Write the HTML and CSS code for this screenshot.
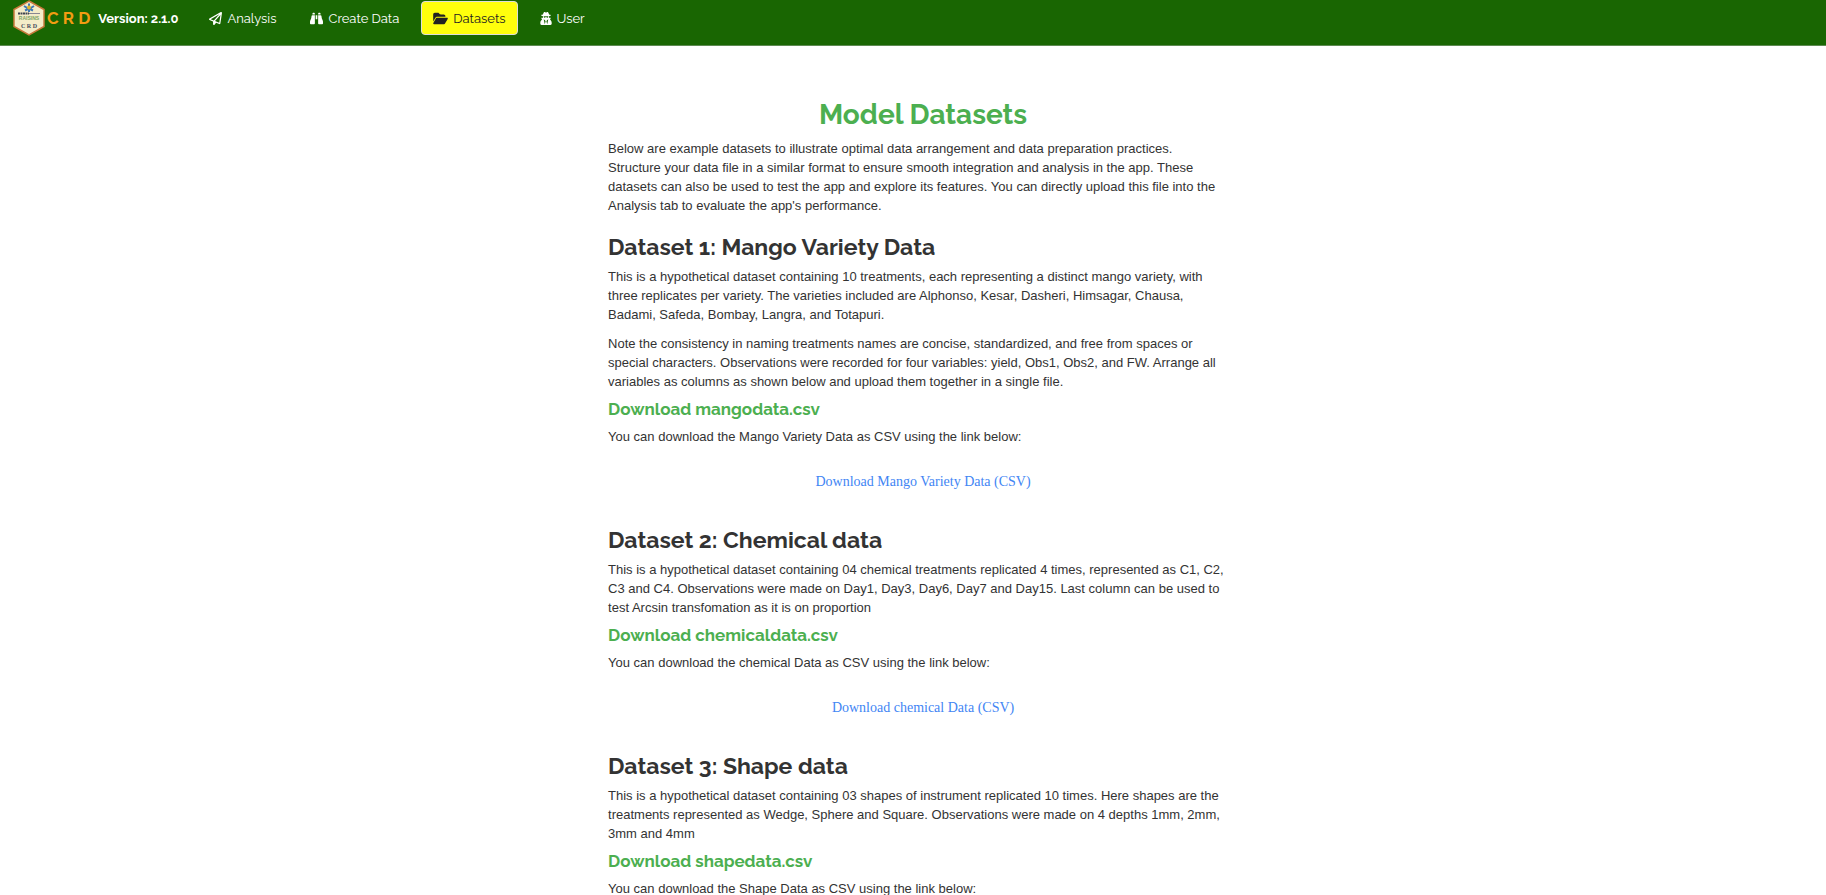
FILE: index.html
```html
<!DOCTYPE html>
<html lang="en">
<head>
<meta charset="utf-8">
<title>CRD - Model Datasets</title>
<link rel="stylesheet" href="styles.css">
</head>
<body>
<header class="navbar">
  <div class="brand">
    <svg class="logo" viewBox="0 0 32 36" aria-hidden="true">
      <path d="M16 1 31 9.500V26.500L16 35 1 26.500V9.500Z" fill="#f4ecc8" stroke="#c8793c" stroke-width="1.500"/>
      <path d="M16 3.500V12M11 6l5 3 5-3M12 10.500l4-2 4 2" stroke="#3f78b5" stroke-width="2" fill="none"/>
      <circle cx="16" cy="7.500" r="2" fill="#e0b431"/>
      <path d="M5 13.500h11" stroke="#3e4450" stroke-width="2" stroke-dasharray="2 .5"/>
      <path d="M16 13.500h11" stroke="#8a8791" stroke-width="1"/>
      <text x="16" y="20" text-anchor="middle" class="logo-name">RAISINS</text>
      <text x="16" y="28" text-anchor="middle" class="logo-mark">C R D</text>
    </svg>
    <span class="brand-name">C R D</span>
    <span class="version">Version: 2.1.0</span>
  </div>
  <nav class="tabs">
    <a class="tab" href="#analysis">
      <svg class="icon" viewBox="0 0 512 512" aria-hidden="true"><path d="M16.100 260.200c-22.600 12.900-20.500 47.300 3.600 57.300L160 376v103.300c0 18.100 14.600 32.700 32.700 32.700 9.700 0 18.900-4.300 25.100-11.800l62-74.300 123.900 51.600c18.900 7.900 40.800-4.500 43.900-24.700l64-416c1.900-12.100-3.400-24.300-13.500-31.200s-23.300-7.500-34-1.400l-448 256zm52.100 25.500L409.700 90.600 190.100 336l1.200 1zM403.300 425.400 236.700 355.900 450.800 116.600z"/></svg>
      <span>Analysis</span>
    </a>
    <a class="tab" href="#create">
      <svg class="icon" viewBox="0 0 512 512" aria-hidden="true"><path d="M128 32h32c17.700 0 32 14.300 32 32v32H96V64c0-17.700 14.300-32 32-32zm64 96v320c0 17.700-14.300 32-32 32H32c-17.700 0-32-14.300-32-32v-59.100c0-34.600 9.400-68.600 27.200-98.300C40.900 267.800 49.700 242.400 53 216l7.500-60c2-16 15.600-28 31.800-28zm227.800 0c16.100 0 29.800 12 31.800 28l7.400 60c3.300 26.400 12.100 51.800 25.800 74.600C502.600 320.300 512 354.300 512 388.900V448c0 17.700-14.300 32-32 32H352c-17.700 0-32-14.300-32-32V128zM320 64c0-17.700 14.300-32 32-32h32c17.700 0 32 14.300 32 32v32h-96zm-32 64v160h-64V128z"/></svg>
      <span>Create Data</span>
    </a>
    <a class="tab tab-active" href="#datasets" aria-current="page">
      <svg class="icon icon-wide" viewBox="0 0 576 512" aria-hidden="true"><path d="m88.700 223.800-88.700 152V96c0-35.300 28.700-64 64-64h117.500c17 0 33.300 6.700 45.300 18.700l26.500 26.500c12 12 28.300 18.700 45.300 18.700H416c35.300 0 64 28.700 64 64v32H144c-22.800 0-43.800 12.100-55.300 31.800zm27.600 16.100C122.100 230 132.600 224 144 224h400c11.500 0 22 6.100 27.700 16.100s5.700 22.200-.1 32.100l-112 192C453.900 474 443.400 480 432 480H32c-11.500 0-22-6.100-27.700-16.100s-5.700-22.200.1-32.100z"/></svg>
      <span>Datasets</span>
    </a>
    <a class="tab" href="#user">
      <svg class="icon icon-narrow" viewBox="0 0 448 512" aria-hidden="true"><path d="M383.900 308.300l23.900-62.600c4-10.500-3.700-21.700-15-21.700h-58.500c11-18.900 17.800-40.600 17.800-64v-.3c39.200-7.800 64-19.100 64-31.700 0-13.300-27.300-25.100-70.100-33-9.200-32.800-27-65.800-40.600-82.800-9.500-11.900-25.900-15.600-39.500-8.800l-27.600 13.800c-9 4.500-19.600 4.500-28.600 0L182.100 3.400c-13.600-6.800-30-3.100-39.500 8.800-13.500 17-31.400 50-40.600 82.800-42.700 7.900-70 19.700-70 33 0 12.600 24.800 23.900 64 31.700v.3c0 23.400 6.800 45.100 17.800 64H56.300c-11.500 0-19.200 11.700-14.700 22.300l25.800 60.200C27.300 329.800 0 372.700 0 422.400v44.800C0 491.900 20.100 512 44.800 512h358.400c24.700 0 44.800-20.100 44.800-44.800v-44.800c0-48.400-25.800-90.400-64.100-114.100zM176 480l-41.600-192 49.600 32 24 40-32 120zm96 0l-32-120 24-40 49.600-32L272 480zm41.700-298.500c-3.900 11.900-7 24.600-16.500 33.400-10.100 9.300-48 22.400-64-25-2.800-8.400-15.400-8.400-18.300 0-17 50.200-56 32.400-64 25-9.500-8.800-12.700-21.500-16.500-33.400-.8-2.500-6.300-5.700-6.300-5.800v-10.800c28.300 3.600 61 5.800 96 5.800s67.700-2.100 96-5.800v10.800c-.1.100-5.600 3.200-6.400 5.800z"/></svg>
      <span>User</span>
    </a>
  </nav>
</header>
<main class="content">
  <h1 class="page-title">Model Datasets</h1>
  <p class="text">Below are example datasets to illustrate optimal data arrangement and data preparation practices. Structure your data file in a similar format to ensure smooth integration and analysis in the app. These datasets can also be used to test the app and explore its features. You can directly upload this file into the Analysis tab to evaluate the app's performance.</p>

  <section>
    <h2 class="section-title">Dataset 1: Mango Variety Data</h2>
    <p class="text">This is a hypothetical dataset containing 10 treatments, each representing a distinct mango variety, with three replicates per variety. The varieties included are Alphonso, Kesar, Dasheri, Himsagar, Chausa, Badami, Safeda, Bombay, Langra, and Totapuri.</p>
    <p class="text">Note the consistency in naming treatments names are concise, standardized, and free from spaces or special characters. Observations were recorded for four variables: yield, Obs1, Obs2, and FW. Arrange all variables as columns as shown below and upload them together in a single file.</p>
    <h4 class="file-title">Download mangodata.csv</h4>
    <p class="text">You can download the Mango Variety Data as CSV using the link below:</p>
    <div class="download"><a class="download-link" href="mangodata.csv">Download Mango Variety Data (CSV)</a></div>
  </section>

  <section>
    <h2 class="section-title">Dataset 2: Chemical data</h2>
    <p class="text">This is a hypothetical dataset containing 04 chemical treatments replicated 4 times, represented as C1, C2, C3 and C4. Observations were made on Day1, Day3, Day6, Day7 and Day15. Last column can be used to test Arcsin transfomation as it is on proportion</p>
    <h4 class="file-title">Download chemicaldata.csv</h4>
    <p class="text">You can download the chemical Data as CSV using the link below:</p>
    <div class="download"><a class="download-link" href="chemicaldata.csv">Download chemical Data (CSV)</a></div>
  </section>

  <section>
    <h2 class="section-title">Dataset 3: Shape data</h2>
    <p class="text">This is a hypothetical dataset containing 03 shapes of instrument replicated 10 times. Here shapes are the treatments represented as Wedge, Sphere and Square. Observations were made on 4 depths 1mm, 2mm, 3mm and 4mm</p>
    <h4 class="file-title">Download shapedata.csv</h4>
    <p class="text">You can download the Shape Data as CSV using the link below:</p>
  </section>
</main>
</body>
</html>
```
FILE: styles.css
```css
body {
  margin: 0;
  background: #fff;
  color: #333;
  font: 13px/19px "Liberation Sans", Arial, sans-serif;
}

.navbar {
  display: flex;
  align-items: flex-start;
  height: 45px;
  padding-left: 12px;
  background: #196602;
  border-bottom: 1px solid #5d8a51;
  font-family: Raleway, Lato, sans-serif;
}

.brand {
  display: flex;
  align-items: center;
  height: 36px;
  color: #fff;
}

.logo {
  width: 34px;
  height: 36px;
}

.logo-name {
  font: bold 5px "Liberation Sans", sans-serif;
  fill: #7fa565;
}

.logo-mark {
  font: bold 6px "Liberation Serif", serif;
  fill: #444a5c;
}

.brand-name {
  margin-left: 1px;
  color: #f39c12;
  font-size: 17px;
  font-weight: bold;
  white-space: nowrap;
}

.version {
  margin-left: 8px;
  font-size: 13px;
  font-weight: bold;
  white-space: nowrap;
}

.tabs {
  display: flex;
  gap: 10px;
  margin: 1px 0 0 19px;
}

.tab {
  display: flex;
  align-items: center;
  gap: 5px;
  box-sizing: border-box;
  height: 34px;
  padding: 0 11px;
  border: 1px solid transparent;
  border-radius: 4px;
  color: #fff;
  font-size: 13px;
  text-decoration: none;
  white-space: nowrap;
}

.tab-active {
  background: #ffff0c;
  border-color: #ddd;
  color: #222;
}

.icon {
  width: 13px;
  height: 13px;
  fill: currentColor;
}

.icon-wide {
  width: 15px;
}

.icon-narrow {
  width: 12px;
}

.content {
  max-width: 630px;
  margin-left: 33.3%;
  padding-top: 53px;
}

.page-title {
  margin: 0 0 9px;
  color: #4caf50;
  font: bold 28px/31px Raleway, Lato, sans-serif;
  text-align: center;
}

.text {
  margin: 0 0 10px;
  padding-right: 12px;
}

.section-title {
  margin: 20px 0 9px;
  font: bold 23px/23px Raleway, Lato, sans-serif;
}

.file-title {
  margin: -1px 0 9px;
  color: #4caf50;
  font: bold 17px/18px Raleway, Lato, sans-serif;
}

.download {
  padding: 16px 0 17px;
  text-align: center;
}

.download-link {
  color: #4285f4;
  font-family: "Liberation Serif", serif;
  font-size: 14px;
  text-decoration: none;
}
```
